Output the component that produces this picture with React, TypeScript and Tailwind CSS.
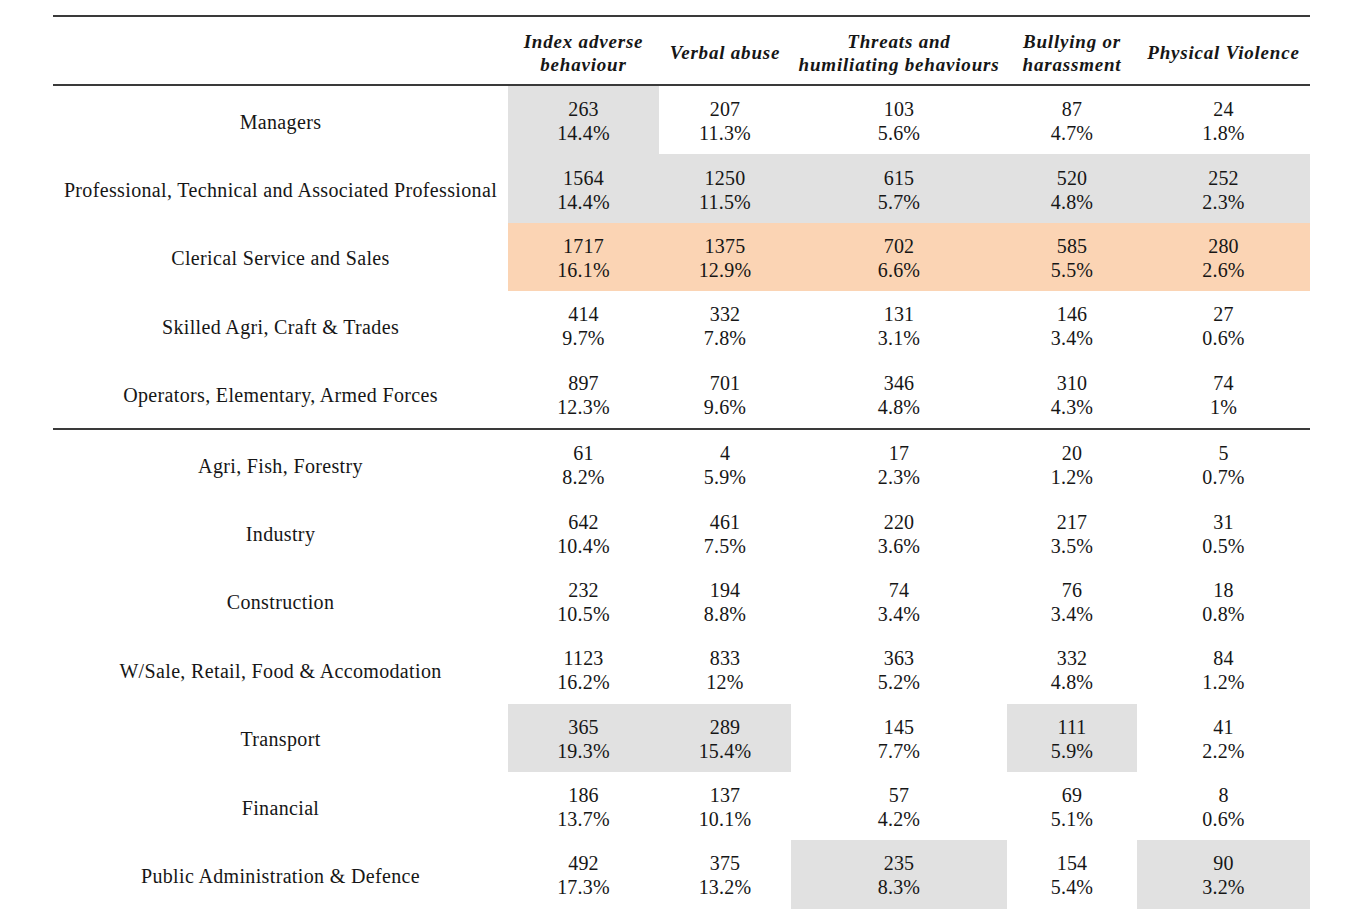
type Shade = '' | 'g' | 'o';

type Row = {
  label: string;
  cells: [string, string, Shade][];
};

const HEADERS: string[][] = [
  ['Index adverse', 'behaviour'],
  ['Verbal abuse'],
  ['Threats and', 'humiliating behaviours'],
  ['Bullying or', 'harassment'],
  ['Physical Violence'],
];

const OCCUPATION: Row[] = [
  {
    label: 'Managers',
    cells: [['263', '14.4%', 'g'], ['207', '11.3%', ''], ['103', '5.6%', ''], ['87', '4.7%', ''], ['24', '1.8%', '']],
  },
  {
    label: 'Professional, Technical and Associated Professional',
    cells: [['1564', '14.4%', 'g'], ['1250', '11.5%', 'g'], ['615', '5.7%', 'g'], ['520', '4.8%', 'g'], ['252', '2.3%', 'g']],
  },
  {
    label: 'Clerical Service and Sales',
    cells: [['1717', '16.1%', 'o'], ['1375', '12.9%', 'o'], ['702', '6.6%', 'o'], ['585', '5.5%', 'o'], ['280', '2.6%', 'o']],
  },
  {
    label: 'Skilled Agri, Craft & Trades',
    cells: [['414', '9.7%', ''], ['332', '7.8%', ''], ['131', '3.1%', ''], ['146', '3.4%', ''], ['27', '0.6%', '']],
  },
  {
    label: 'Operators, Elementary, Armed Forces',
    cells: [['897', '12.3%', ''], ['701', '9.6%', ''], ['346', '4.8%', ''], ['310', '4.3%', ''], ['74', '1%', '']],
  },
];

const SECTOR: Row[] = [
  {
    label: 'Agri, Fish, Forestry',
    cells: [['61', '8.2%', ''], ['4', '5.9%', ''], ['17', '2.3%', ''], ['20', '1.2%', ''], ['5', '0.7%', '']],
  },
  {
    label: 'Industry',
    cells: [['642', '10.4%', ''], ['461', '7.5%', ''], ['220', '3.6%', ''], ['217', '3.5%', ''], ['31', '0.5%', '']],
  },
  {
    label: 'Construction',
    cells: [['232', '10.5%', ''], ['194', '8.8%', ''], ['74', '3.4%', ''], ['76', '3.4%', ''], ['18', '0.8%', '']],
  },
  {
    label: 'W/Sale, Retail, Food & Accomodation',
    cells: [['1123', '16.2%', ''], ['833', '12%', ''], ['363', '5.2%', ''], ['332', '4.8%', ''], ['84', '1.2%', '']],
  },
  {
    label: 'Transport',
    cells: [['365', '19.3%', 'g'], ['289', '15.4%', 'g'], ['145', '7.7%', ''], ['111', '5.9%', 'g'], ['41', '2.2%', '']],
  },
  {
    label: 'Financial',
    cells: [['186', '13.7%', ''], ['137', '10.1%', ''], ['57', '4.2%', ''], ['69', '5.1%', ''], ['8', '0.6%', '']],
  },
  {
    label: 'Public Administration & Defence',
    cells: [['492', '17.3%', ''], ['375', '13.2%', ''], ['235', '8.3%', 'g'], ['154', '5.4%', ''], ['90', '3.2%', 'g']],
  },
];

const GRID = 'grid grid-cols-[455px_151px_132px_216px_130px_173px]';

function shadeClass(s: Shade) {
  if (s === 'g') return 'bg-[#e1e1e1]';
  if (s === 'o') return 'bg-[#fbd4b4]';
  return '';
}

function DataRow({ row }: { row: Row }) {
  return (
    <div className={`${GRID} h-[68.4px]`}>
      <div className="flex items-center justify-center pt-[3px] text-[20px] tracking-[0.35px] whitespace-nowrap">
        {row.label}
      </div>
      {row.cells.map(([n, pct, shade], i) => (
        <div
          key={i}
          className={`flex flex-col items-center justify-center pt-[2px] text-[20px] leading-[24px] tracking-[0.2px] ${shadeClass(shade)}`}
        >
          <span>{n}</span>
          <span>{pct}</span>
        </div>
      ))}
    </div>
  );
}

export default function App() {
  return (
    <div className="min-h-[919px] bg-white pt-[15px] pl-[53px] font-['Liberation_Serif','Times_New_Roman',serif] text-[#161616]">
      <div className="w-[1257px]">
        <div className={`${GRID} h-[71px] border-y-2 border-[#3a3a3a]`}>
          <div />
          {HEADERS.map((lines, i) => (
            <div
              key={i}
              className="flex flex-col items-center justify-center pt-[4px] text-[19px] leading-[23px] tracking-[0.8px] font-bold italic whitespace-nowrap"
            >
              {lines.map((l) => (
                <span key={l}>{l}</span>
              ))}
            </div>
          ))}
        </div>

        {OCCUPATION.map((r) => (
          <DataRow key={r.label} row={r} />
        ))}

        <div className="border-t-2 border-[#3a3a3a]" />

        {SECTOR.map((r) => (
          <DataRow key={r.label} row={r} />
        ))}
      </div>
    </div>
  );
}
